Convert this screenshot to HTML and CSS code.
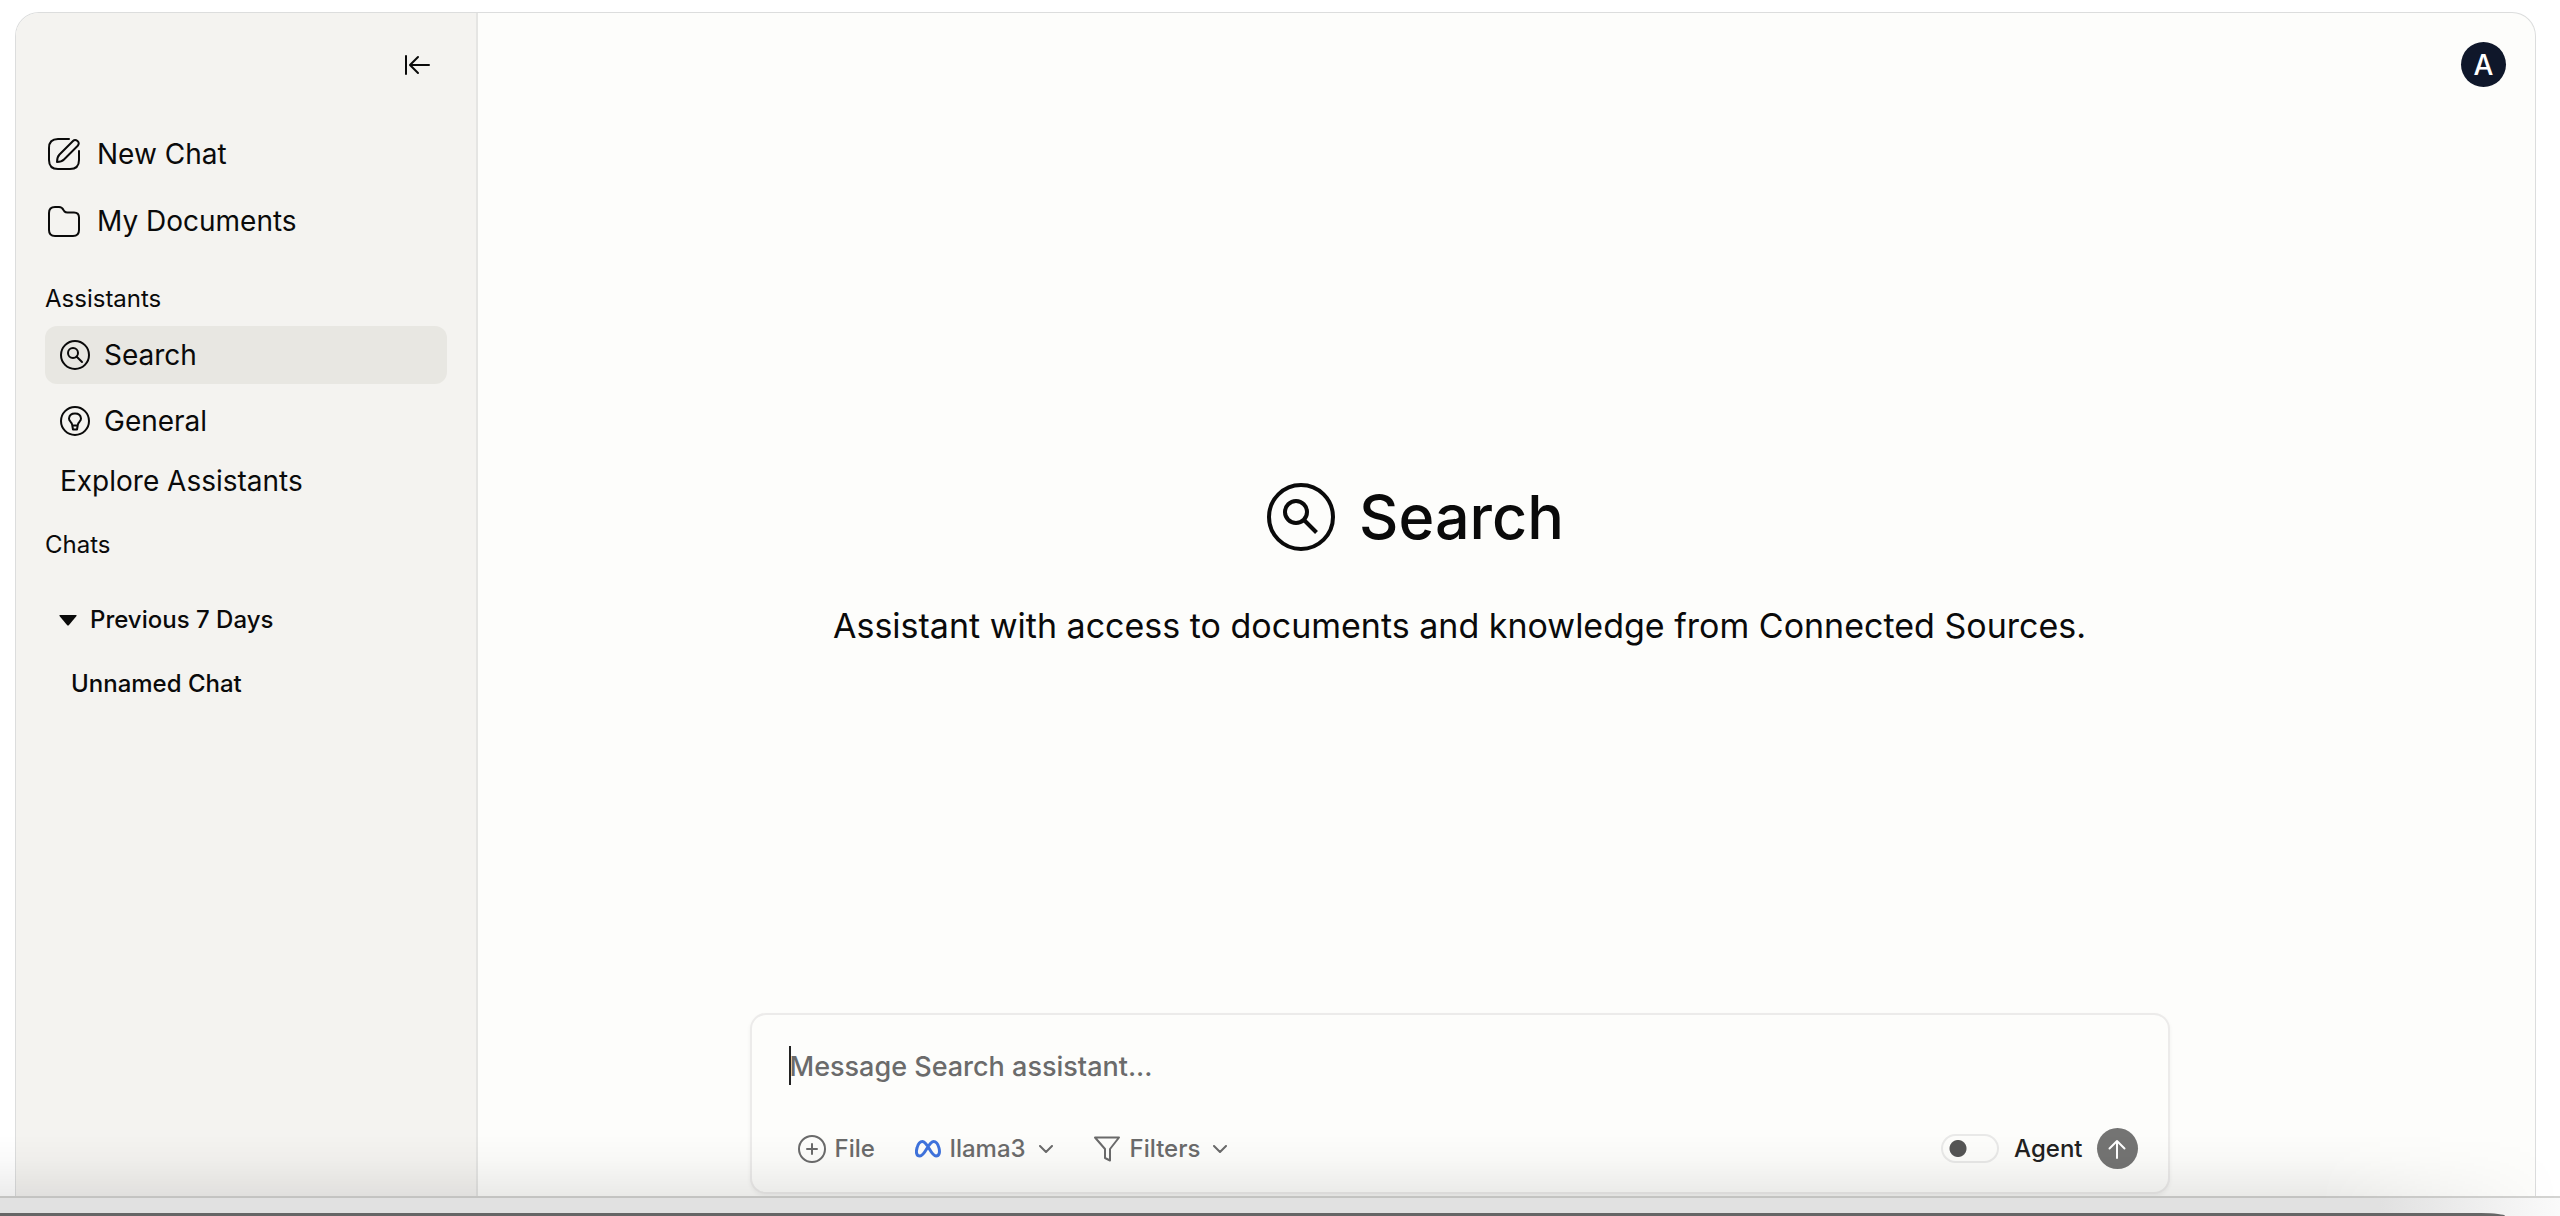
FILE: index.html
```html
<!DOCTYPE html>
<html lang="en">
<head>
<meta charset="utf-8">
<meta name="viewport" content="width=device-width, initial-scale=1">
<title>Search</title>
<link rel="stylesheet" href="styles.css">
</head>
<body>
<svg class="defs" aria-hidden="true">
  <symbol id="search-badge" viewBox="0 0 68 68">
    <circle cx="34" cy="34" r="32"/>
    <circle cx="29" cy="29" r="11"/>
    <path d="M37 37l12.500 12.500"/>
  </symbol>
  <symbol id="chevron" viewBox="0 0 14 8">
    <path d="M1 1l6 6 6-6"/>
  </symbol>
</svg>
<div class="window">
  <aside class="sidebar">
    <div class="sidebar-top">
      <button class="icon-button" type="button" aria-label="Collapse sidebar">
        <svg class="icon collapse-icon" viewBox="0 0 26 20"><path d="M2 1v18M25 10H7M14 2L6 10l8 8"/></svg>
      </button>
    </div>
    <nav class="primary-nav">
      <a class="nav-link" href="#">
        <svg class="icon nav-icon" viewBox="0 0 32 32"><path d="M21 1H10Q1 1 1 10v12q0 9 9 9h12q9 0 9-9V13"/><path d="M9 24q0-5 2.500-7.500L25 3q2-2 4.500 0t0 5L16 21.500Q13.500 24 9 24z"/></svg>
        New Chat
      </a>
      <a class="nav-link" href="#">
        <svg class="icon nav-icon" viewBox="0 0 32 32"><path d="M1 8q0-6 6-6h4q3 0 4.500 3l1 1.500q1 1 3 1H26q5 0 5 5V25q0 6-6 6H7q-6 0-6-6z"/></svg>
        My Documents
      </a>
    </nav>
    <h2 class="section-title">Assistants</h2>
    <nav class="assistants">
      <a class="assistant active" href="#">
        <svg class="icon assistant-icon" viewBox="0 0 30 30"><circle cx="15" cy="15" r="14"/><circle cx="13" cy="13" r="5"/><path d="M16.500 16.500l5.500 5.500"/></svg>
        Search
      </a>
      <a class="assistant" href="#">
        <svg class="icon assistant-icon" viewBox="0 0 30 30"><circle cx="15" cy="15" r="14"/><path d="M12.300 19.500q0-2-1.800-3.800Q9 14 9 12.500 9.500 7.500 15 7.500t6 5q0 1.500-1.500 3.200-1.800 1.800-1.800 3.800zM12.300 19.500l.7 4h4l.7-4"/></svg>
        General
      </a>
    </nav>
    <a class="explore" href="#">Explore Assistants</a>
    <h2 class="section-title chats-title">Chats</h2>
    <button class="group-toggle" type="button">
      <svg class="caret" viewBox="0 0 18 11"><path d="M1 0h16q1 0 .5 1L10 10q-1 1-2 0L.5 1Q0 0 1 0z"/></svg>
      Previous 7 Days
    </button>
    <a class="chat-link" href="#">Unnamed Chat</a>
  </aside>
  <main class="main">
    <header class="topbar"><button class="avatar" type="button" aria-label="Account">A</button></header>
    <section class="intro">
      <h1 class="title"><svg class="icon title-icon"><use href="#search-badge"/></svg>Search</h1>
      <p class="description">Assistant with access to documents and knowledge from Connected Sources.</p>
    </section>
    <form class="composer">
      <input class="message" type="text" placeholder="Message Search assistant..." aria-label="Message">
      <span class="text-cursor"></span>
      <div class="toolbar">
        <button class="tool" type="button">
          <svg class="icon file-icon" viewBox="0 0 28 28"><circle cx="14" cy="14" r="13"/><path d="M14 9v10M9 14h10"/></svg>File
        </button>
        <button class="tool" type="button">
          <svg class="icon meta-icon" viewBox="0 0 26 18"><path d="M5 16C1 16 1 11.500 2 8c1-4 3-6.500 5.500-6.500C12.500 1.500 16 16 21 16c3.500 0 4-4 3-8-1-4-3-6.500-5.500-6.500C13.500 1.500 10 16 5 16z"/></svg>llama3
          <svg class="icon chevron"><use href="#chevron"/></svg>
        </button>
        <button class="tool" type="button">
          <svg class="icon filter-icon" viewBox="0 0 28 26"><path d="M2 1.500h24L17 13v11.500l-5-2.500v-9z"/></svg>Filters
          <svg class="icon chevron"><use href="#chevron"/></svg>
        </button>
        <label class="agent"><input class="switch" type="checkbox" role="switch">Agent</label>
        <button class="send" type="submit" aria-label="Send">
          <svg class="icon send-icon" viewBox="0 0 18 20"><path d="M9 19V2M1.500 9.500L9 2l7.500 7.500"/></svg>
        </button>
      </div>
    </form>
  </main>
</div>
<footer class="dock"><div class="dock-edge"></div></footer>
</body>
</html>
```

FILE: styles.css
```css
* { box-sizing: border-box; }

body {
  margin: 0;
  min-height: 100vh;
  display: flex;
  flex-direction: column;
  padding-top: 12px;
  background: #fff;
  color: #0a0a0a;
  font-family: "Inter", "Liberation Sans", sans-serif;
  font-size: 28px;
  line-height: 40px;
}

button, input { font: inherit; color: inherit; }
button { padding: 0; border: 0; background: none; }
a { color: inherit; text-decoration: none; }
h1, h2, p { margin: 0; }

.defs { position: absolute; width: 0; height: 0; }

.icon {
  flex: none;
  fill: none;
  stroke: currentColor;
  stroke-width: 2px;
  stroke-linecap: round;
  stroke-linejoin: round;
}

/* Window */
.window {
  flex: 1;
  display: flex;
  margin: 0 24px 0 15px;
  border: 1px solid #dcdddd;
  border-bottom: 0;
  border-radius: 24px 24px 0 0;
  background: #fdfdfb;
  overflow: hidden;
}

/* Sidebar */
.sidebar {
  flex: none;
  width: 462px;
  display: flex;
  flex-direction: column;
  padding: 0 29px;
  border-right: 2px solid #e5e5e3;
  background: #f4f3f0;
}

.sidebar-top {
  display: flex;
  justify-content: flex-end;
  padding: 32px 17px 49px 0;
}

.icon-button { display: flex; align-items: center; height: 40px; }
.collapse-icon { width: 26px; height: 20px; }
.primary-nav { display: flex; flex-direction: column; gap: 27px; }

.nav-link { display: flex; align-items: center; gap: 17px; padding-left: 3px; }
.nav-icon { width: 32px; height: 32px; }

.section-title {
  margin-top: 39px;
  font-size: 24px;
  font-weight: 400;
  line-height: 38px;
}

.assistants { display: flex; flex-direction: column; gap: 8px; margin-top: 8px; }

.assistant {
  display: flex;
  align-items: center;
  gap: 14px;
  height: 58px;
  padding: 0 15px;
  border-radius: 12px;
}

.assistant.active { background: #e8e7e2; }
.assistant-icon { width: 30px; height: 30px; }
.explore { margin-top: 11px; padding-left: 15px; }
.chats-title { margin-top: 25px; }

.group-toggle {
  display: flex;
  align-items: center;
  gap: 13px;
  margin-top: 36px;
  padding-left: 14px;
  font-size: 24px;
  font-weight: 500;
}

.caret { width: 18px; height: 11px; fill: currentColor; }
.chat-link { margin-top: 24px; padding-left: 26px; font-size: 24px; font-weight: 500; }

/* Main area */
.main { flex: 1; display: flex; flex-direction: column; }
.topbar { display: flex; justify-content: flex-end; padding: 29px 29px 0 0; }

.avatar {
  width: 45px;
  height: 45px;
  border-radius: 50%;
  background: #0f172a;
  color: #fff;
  font-weight: 500;
}

.intro {
  flex: 1;
  display: flex;
  flex-direction: column;
  align-items: center;
  justify-content: center;
  gap: 43px;
  padding: 30px 94px 0 0;
}

.title {
  display: flex;
  align-items: center;
  gap: 24px;
  padding-right: 88px;
  font-size: 61px;
  font-weight: 500;
  line-height: 78px;
}

.title-icon { width: 68px; height: 68px; stroke-width: 4px; stroke-linecap: butt; }
.description { font-size: 34px; line-height: 54px; }

/* Composer */
.composer {
  position: relative;
  align-self: center;
  width: 1420px;
  max-width: 90%;
  margin: 0 94px 2px 0;
  padding: 26px 30px 23px 38px;
  border: 2px solid #ecebea;
  border-radius: 16px;
  background: #fdfdfb;
  box-shadow: 0 2px 4px #0000000d;
}

.message {
  display: block;
  width: 100%;
  height: 50px;
  padding: 0;
  border: 0;
  outline: 0;
  background: none;
  font-size: 27px;
  font-weight: 500;
}

.message::placeholder { color: #6b6b6b; opacity: 1; }

.text-cursor {
  position: absolute;
  top: 31px;
  left: 37px;
  width: 2px;
  height: 39px;
  background: #222;
}

.toolbar {
  display: flex;
  align-items: center;
  margin-top: 37px;
  padding-left: 8px;
  font-size: 24px;
  font-weight: 500;
  color: #6b6b6b;
}

.tool { display: flex; align-items: center; gap: 9px; margin-right: 40px; }
.file-icon { width: 28px; height: 28px; }
.meta-icon { width: 26px; height: 18px; stroke: #3f73dd; stroke-width: 3px; }
.filter-icon { width: 28px; height: 26px; }
.chevron { width: 14px; height: 8px; margin-left: 4px; }

.agent {
  display: flex;
  align-items: center;
  gap: 15px;
  margin-left: auto;
  color: #222;
}

.switch {
  appearance: none;
  width: 58px;
  height: 29px;
  margin: 0;
  border: 2px solid #e9e9e8;
  border-radius: 15px;
  background: radial-gradient(circle at 15px 50%, #555 8px, transparent 9px);
}

.send {
  display: flex;
  align-items: center;
  justify-content: center;
  width: 41px;
  height: 41px;
  margin-left: 14px;
  border-radius: 50%;
  background: #747473;
  color: #fff;
}

.send-icon { width: 18px; height: 20px; }

/* Strip under the window, with its shadow cast upwards */
.dock {
  position: relative;
  padding-top: 15px;
  border-top: 2px solid #d4d4d2;
  background: linear-gradient(90deg, #e1e1e1 calc(100% - 180px), #fafafa);
}

.dock::before {
  content: "";
  position: absolute;
  right: 0;
  bottom: 100%;
  left: 0;
  height: 64px;
  background: linear-gradient(#0000, #00000005 40%, #00000014);
  mask-image: linear-gradient(90deg, #000 calc(100% - 240px), #0000);
  pointer-events: none;
}

.dock-edge {
  height: 3px;
  margin-right: 55px;
  border-top-right-radius: 24px 3px;
  background: #666;
}
```
